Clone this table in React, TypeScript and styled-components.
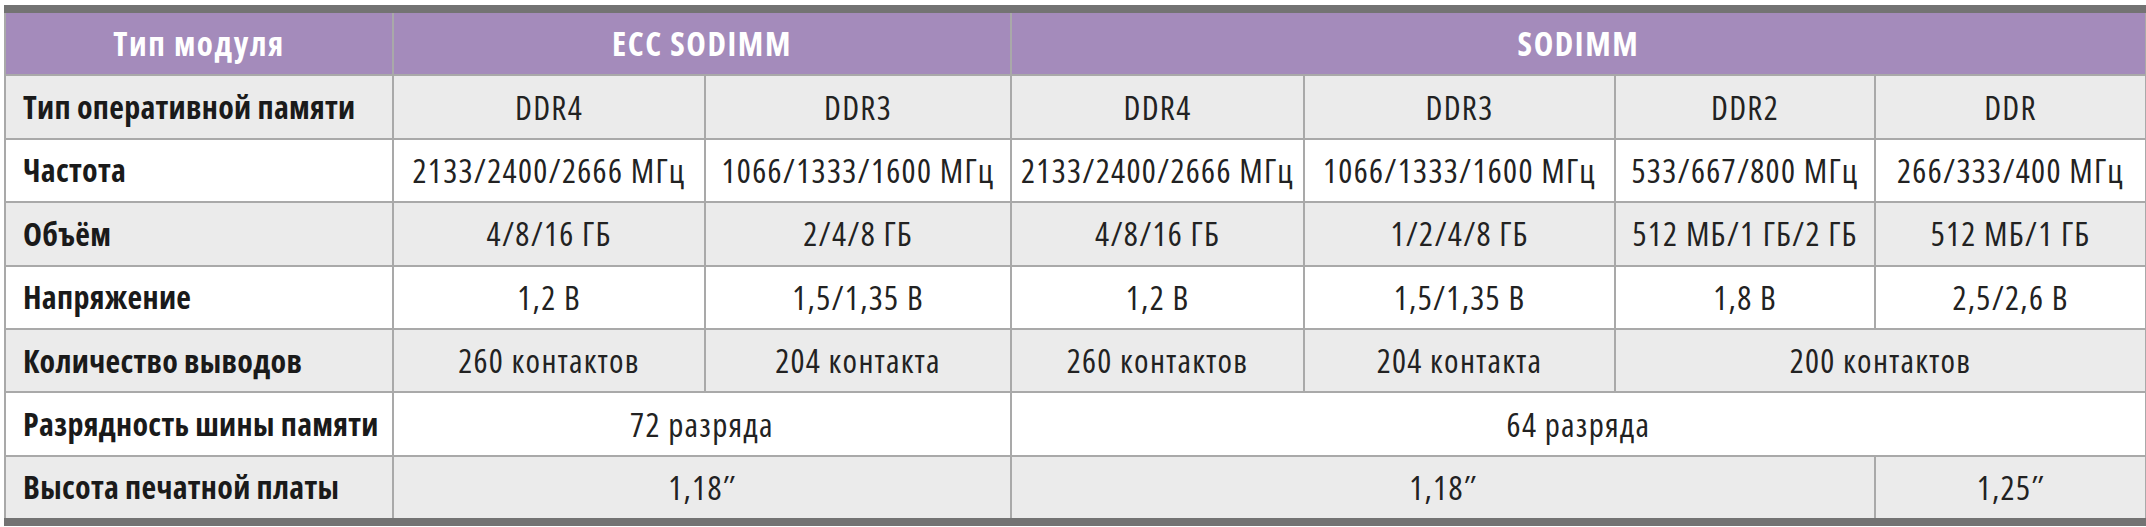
import * as React from "react";
import styled, { createGlobalStyle } from "styled-components";

const GlobalStyle = createGlobalStyle`
    html, body {
        margin: 0;
        padding: 0;
        background: #ffffff;
    }
    body {
        font-family: "Open Sans", "DejaVu Sans Condensed", sans-serif;
        font-stretch: 75%;
    }
`;

// column widths measured from the reference
const COLUMNS = "386px 310px 304px 291px 309px 258px 269px";

type Tone = "head" | "gray" | "white";

interface Cell {
    text: string;
    span?: number;
}

interface Row {
    label: string;
    cells: Cell[];
}

const rows: Row[] = [
    {
        label: "Тип оперативной памяти",
        cells: [
            { text: "DDR4" },
            { text: "DDR3" },
            { text: "DDR4" },
            { text: "DDR3" },
            { text: "DDR2" },
            { text: "DDR" },
        ],
    },
    {
        label: "Частота",
        cells: [
            { text: "2133/2400/2666 МГц" },
            { text: "1066/1333/1600 МГц" },
            { text: "2133/2400/2666 МГц" },
            { text: "1066/1333/1600 МГц" },
            { text: "533/667/800 МГц" },
            { text: "266/333/400 МГц" },
        ],
    },
    {
        label: "Объём",
        cells: [
            { text: "4/8/16 ГБ" },
            { text: "2/4/8 ГБ" },
            { text: "4/8/16 ГБ" },
            { text: "1/2/4/8 ГБ" },
            { text: "512 МБ/1 ГБ/2 ГБ" },
            { text: "512 МБ/1 ГБ" },
        ],
    },
    {
        label: "Напряжение",
        cells: [
            { text: "1,2 В" },
            { text: "1,5/1,35 В" },
            { text: "1,2 В" },
            { text: "1,5/1,35 В" },
            { text: "1,8 В" },
            { text: "2,5/2,6 В" },
        ],
    },
    {
        label: "Количество выводов",
        cells: [
            { text: "260 контактов" },
            { text: "204 контакта" },
            { text: "260 контактов" },
            { text: "204 контакта" },
            { text: "200 контактов", span: 2 },
        ],
    },
    {
        label: "Разрядность шины памяти",
        cells: [
            { text: "72 разряда", span: 2 },
            { text: "64 разряда", span: 4 },
        ],
    },
    {
        label: "Высота печатной платы",
        cells: [
            { text: "1,18″", span: 2 },
            { text: "1,18″", span: 3 },
            { text: "1,25″" },
        ],
    },
];

export default function App() {
    return (
        <>
            <GlobalStyle />
            <Page>
                <Table>
                    <HeadCell $tone="head">Тип модуля</HeadCell>
                    <HeadCell $tone="head" $span={2}>
                        ECC SODIMM
                    </HeadCell>
                    <HeadCell $tone="head" $span={4}>
                        SODIMM
                    </HeadCell>
                    {rows.map((row, i) => {
                        const tone: Tone = i % 2 === 0 ? "gray" : "white";
                        return (
                            <React.Fragment key={row.label}>
                                <LabelCell $tone={tone}>{row.label}</LabelCell>
                                {row.cells.map((c, j) => (
                                    <ValueCell
                                        key={j}
                                        $tone={tone}
                                        $span={c.span ?? 1}
                                    >
                                        {c.text}
                                    </ValueCell>
                                ))}
                            </React.Fragment>
                        );
                    })}
                </Table>
            </Page>
        </>
    );
}

const Page = styled.div`
    padding: 5px 5px 0 4px;
`;

const Table = styled.div`
    display: grid;
    grid-template-columns: ${COLUMNS};
    grid-auto-rows: 61.4px;
    gap: 2px;
    width: max-content;
    background: #a9a9a9;
    padding: 0 2px;
    border-top: 8px solid #737373;
    border-bottom: 8px solid #737373;
`;

const toneBg: Record<Tone, string> = {
    head: "#a48bbb",
    gray: "#ebebeb",
    white: "#ffffff",
};

const BaseCell = styled.div<{ $tone: Tone; $span?: number }>`
    grid-column: span ${(p) => p.$span ?? 1};
    display: flex;
    align-items: center;
    background: ${(p) => toneBg[p.$tone]};
    font-size: 32px;
    line-height: 1;
    white-space: nowrap;
`;

const HeadCell = styled(BaseCell)`
    justify-content: center;
    color: #ffffff;
    font-size: 33px;
    font-weight: bold;
    letter-spacing: 1.6px;
`;

const LabelCell = styled(BaseCell)`
    padding-left: 17px;
    color: #1a1a1a;
    font-weight: bold;
    letter-spacing: 0.3px;
`;

const ValueCell = styled(BaseCell)`
    justify-content: center;
    color: #222222;
    font-size: 33px;
    letter-spacing: 1.3px;
`;
